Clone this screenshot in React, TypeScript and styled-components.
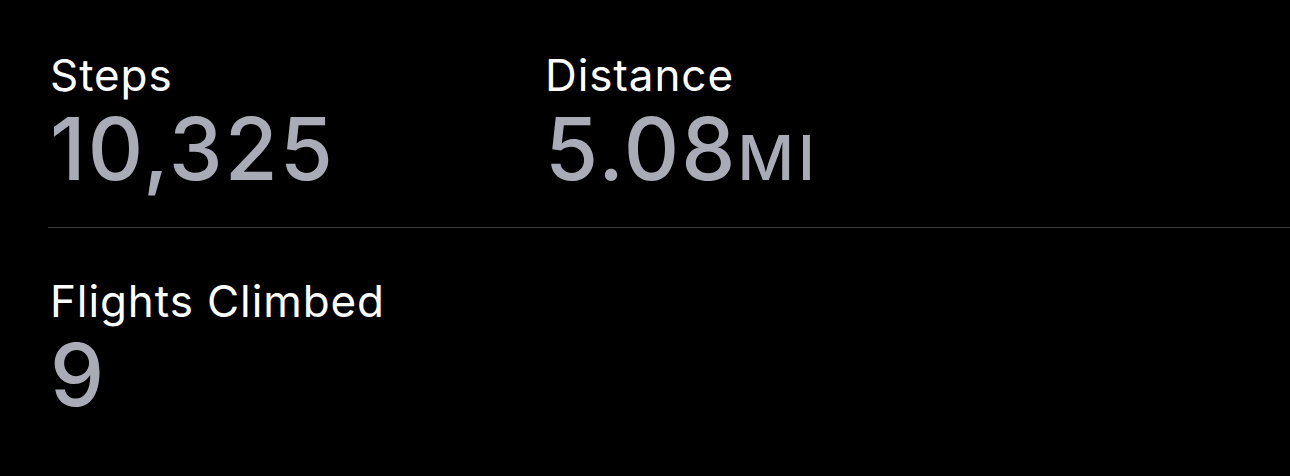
import React from "react";
import styled, { createGlobalStyle } from "styled-components";

const Global = createGlobalStyle`
  html, body { margin: 0; padding: 0; background: #000; }
  body { font-family: Inter, "Liberation Sans", sans-serif; -webkit-font-smoothing: antialiased; }
`;

const Page = styled.div`
  width: 1290px;
  height: 476px;
  background: #000;
  padding-top: 51px;
  padding-left: 48px;
  box-sizing: border-box;
  overflow: hidden;
`;

const Row = styled.div`
  display: grid;
  grid-template-columns: 495px 1fr;
  padding-left: 2px;
`;

const Metric = styled.div`
  display: flex;
  flex-direction: column;
  gap: 10px;
`;

const Label = styled.div`
  color: #ffffff;
  font-size: 44px;
  line-height: 48px;
  font-weight: 400;
  letter-spacing: 0.9px;
`;

const Value = styled.div`
  color: #a9acb6;
  font-size: 86px;
  line-height: 80px;
  font-weight: 500;
  letter-spacing: 2px;
`;

const Unit = styled.span`
  font-size: 62px;
  letter-spacing: 4px;
`;

const Divider = styled.div`
  height: 1px;
  background: #3a3a3c;
  margin-top: 29px;
  margin-bottom: 49px;
`;

export default function App() {
  return (
    <>
      <Global />
      <Page>
        <Row>
          <Metric>
            <Label>Steps</Label>
            <Value>10,325</Value>
          </Metric>
          <Metric>
            <Label>Distance</Label>
            <Value>
              5.08<Unit>MI</Unit>
            </Value>
          </Metric>
        </Row>
        <Divider />
        <Row>
          <Metric>
            <Label>Flights Climbed</Label>
            <Value>9</Value>
          </Metric>
        </Row>
      </Page>
    </>
  );
}
